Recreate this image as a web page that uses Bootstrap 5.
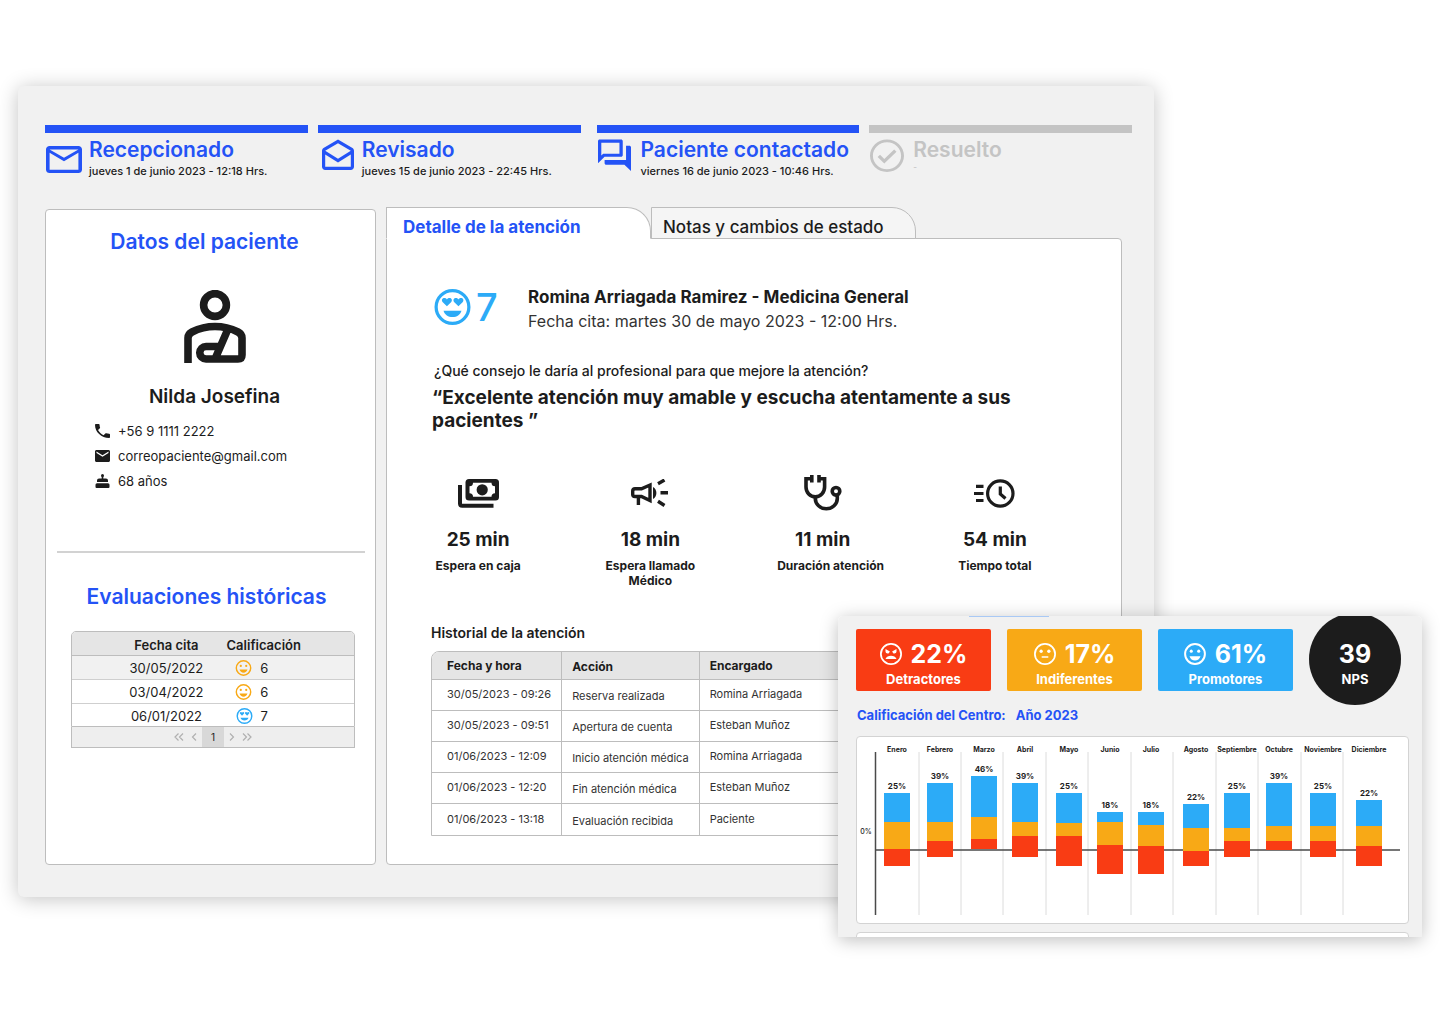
<!DOCTYPE html>
<html lang="es">
<head>
<meta charset="utf-8">
<meta name="viewport" content="width=device-width, initial-scale=1">
<title>Detalle de la atención</title>
<link href="https://cdn.jsdelivr.net/npm/bootstrap@5.3.0/dist/css/bootstrap.min.css" rel="stylesheet">
<style>
  :root { --brand: #2453f6; --ink: #1c1c1c; --sky: #2cabf7; --amber: #f8a916; --red: #f93c14; --line: #bdbdbd; --panel: #f1f1f1; }
  body { font-family: Inter, "Liberation Sans", sans-serif; color: var(--ink); background: #fff; font-size: 13px; line-height: 16px; }
  svg { display: block; flex: none; }
  .stage { padding: 86px 286px 64px 18px; }
  .case-panel { background: var(--panel); border-radius: 6px; box-shadow: 0 2px 20px rgba(0,0,0,.24); padding: 39px 22px 32px 27px; }
  .steps { gap: 16px; }
  .step-pair { gap: 10px; }
  .step { border-top: 8px solid var(--brand); color: var(--brand); height: 82px; padding-top: 5px; }
  .step-icon { width: 44px; height: 34px; padding-left: 1px; }
  .step-title { font-size: 21px; line-height: 24px; font-weight: 600; margin: 0 0 1px; }
  .step-date { font-size: 11px; line-height: 16px; font-weight: 500; color: var(--ink); margin: 0; }
  .step-pending { border-color: #c4c4c4; color: #c4c4c4; }
  .step-pending .step-date { color: #c4c4c4; font-size: 8px; line-height: 8px; }
  .workspace { gap: 10px; padding-right: 10px; }
  .patient { flex: 0 0 331px; margin-top: 2px; background: #fff; border: 1px solid var(--line); border-radius: 4px; padding: 20px 11px; }
  .section-title { color: var(--brand); font-size: 21px; line-height: 24px; font-weight: 600; margin: 0 12px 0 0; text-align: center; }
  .patient-icon { margin: 36px auto 0; }
  .patient-name { font-size: 19px; line-height: 24px; font-weight: 600; margin: 22px 0 0; }
  .contact { margin: 9px 0 0 38px; padding: 0; list-style: none; }
  .contact li { height: 25px; gap: 8px; }
  .contact a { color: inherit; text-decoration: none; }
  .divider { border: 0; border-top: 2px solid #d2d2d2; opacity: 1; margin: 58px -1px 32px 0; }
  .ratings { margin: 22px 9px 0 14px; }
  .ratings table { width: 100%; border-collapse: separate; border-spacing: 0; border: 1px solid var(--line); border-radius: 5px 5px 0 0; overflow: hidden; }
  .ratings th { background: #e5e5e5; font-size: 13px; font-weight: 600; height: 24px; padding: 2px 0 0; text-align: center; border-bottom: 1px solid var(--line); }
  .ratings td { height: 24px; padding: 1px 0 0; text-align: center; border-bottom: 1px solid #cfcfcf; }
  .ratings tbody tr:last-child td { border-bottom: 0; height: 22px; }
  .ratings tbody tr:first-child td { background: #f1f1f1; }
  .pager { background: #eee; border: 1px solid var(--line); border-top: 0; height: 21px; gap: 3px; }
  .pager button { background: none; border: 0; padding: 0 2px; height: 20px; color: #b0b0b0; font-size: 10px; }
  .pager .current { background: #d8d8d8; width: 22px; color: var(--ink); }
  .tabs { margin-bottom: -1px; position: relative; }
  .tabs button { width: 265px; height: 32px; font-size: 17px; text-align: left; border: 1px solid var(--line); border-radius: 0 24px 0 0; background: #f5f5f5; color: var(--ink); padding: 8px 0 0 11px; line-height: 22px; font-weight: 500; }
  .tabs button.active { background: #fff; border-bottom-color: #fff; color: var(--brand); font-weight: 700; padding-left: 16px; }
  .detail { background: #fff; border: 1px solid var(--line); border-radius: 0 4px 4px 4px; padding: 46px 40px 28px 44px; }
  .score { color: var(--sky); font-size: 38px; line-height: 38px; font-weight: 500; gap: 5px; width: 93px; padding-left: 3px; padding-top: 3px; }
  .visit-name { font-size: 17px; line-height: 24px; font-weight: 700; margin: 0; }
  .visit-date { font-size: 16px; line-height: 24px; color: #333; margin: 0; }
  .question { font-size: 14px; line-height: 20px; font-weight: 500; margin: 28px 0 0 3px; }
  .quote { font-size: 19px; line-height: 23px; font-weight: 700; margin: 5px 0 0 1px; max-width: 600px; }
  .metrics { margin: 41px 0 0 -39px; max-width: 690px; }
  .metric-icon { height: 40px; }
  .metric-value { font-size: 19px; line-height: 24px; font-weight: 700; margin: 15px 0 0; }
  .metric-label { font-size: 12px; line-height: 15px; font-weight: 700; margin: 6px 0 0; }
  .log-title { font-size: 14px; line-height: 18px; font-weight: 600; margin: 36px 0 9px; }
  .log { width: 100%; border-collapse: separate; border-spacing: 0; border: 1px solid var(--line); border-radius: 8px 0 0 0; overflow: hidden; font-size: 11px; color: #333; white-space: nowrap; }
  .log th { background: #e5e5e5; font-size: 12px; font-weight: 700; color: var(--ink); height: 28px; }
  .log th, .log td { border-bottom: 1px solid var(--line); padding: 0 10px; }
  .log td { height: 31px; padding-bottom: 2px; }
  .log tr > :first-child { width: 130px; padding-left: 15px; border-right: 1px solid var(--line); }
  .log tr > :nth-child(2) { width: 137px; padding-top: 2px; padding-bottom: 0; border-right: 1px solid var(--line); }
  .log tr:last-child td { border-bottom: 0; }
  .log thead th { border-bottom: 1px solid var(--line); }
  .nps-panel { position: absolute; top: 616px; right: 18px; width: 584px; height: 321px; overflow: hidden; background: var(--panel); border-radius: 5px 5px 0 0; padding: 0 13px 0 18px; }
  .nps-shadow { position: absolute; top: 616px; right: 18px; width: 584px; height: 321px; border-radius: 5px; box-shadow: 0 3px 18px rgba(0,0,0,.26); }
  .filter-edge { width: 80px; height: 1px; background: #a9c9f5; margin-left: 113px; }
  .tiles { gap: 16px; height: 89px; }
  .tile { width: 135px; height: 62px; margin-top: 12px; border-radius: 2px; color: #fff; text-align: center; padding-top: 9px; }
  .tile-value { font-size: 25px; line-height: 32px; font-weight: 700; gap: 9px; margin: 0; }
  .tile-label { font-size: 13px; line-height: 16px; font-weight: 700; margin: 1px 0 0; }
  .nps-disc { width: 92px; height: 92px; margin-top: -4px; border-radius: 50%; background: var(--ink); color: #fff; text-align: center; padding-top: 25px; }
  .chart-title { color: var(--brand); font-size: 13px; line-height: 18px; font-weight: 700; margin: 0 0 12px 1px; gap: 10px; }
  .chart-card { background: #fff; border: 1px solid #d3d3d3; border-radius: 4px; }
  .chart-card text { font-family: Inter, "Liberation Sans", sans-serif; font-weight: 700; fill: var(--ink); text-anchor: middle; }
  .next-card { height: 30px; margin-top: 8px; }
</style>
<script src="https://cdn.jsdelivr.net/npm/bootstrap@5.3.0/dist/js/bootstrap.bundle.min.js"></script>
</head>
<body>
<svg width="0" height="0" class="position-absolute" aria-hidden="true">
  <symbol id="smile" viewBox="2 2 20 20">
    <circle cx="12" cy="12" r="9" fill="none" stroke="currentColor" stroke-width="1.8"/>
    <circle cx="8.6" cy="9.4" r="1.4" fill="currentColor"/><circle cx="15.4" cy="9.4" r="1.4" fill="currentColor"/>
    <path fill="currentColor" d="M12 18c2.300 0 4.300-1.500 5-4H7c.7 2.500 2.700 4 5 4z"/>
  </symbol>
  <symbol id="love" viewBox="2 2 20 20">
    <circle cx="12" cy="12" r="9.100" fill="none" stroke="currentColor" stroke-width="1.800"/>
    <path fill="currentColor" d="M8.900 11.600 6.600 9.300C5.600 8.200 6.400 7 7.500 7c.7 0 1.100.3 1.400.8.3-.5.7-.8 1.400-.8 1.100 0 1.900 1.200.9 2.300z"/>
    <path fill="currentColor" d="M15.300 11.600 13 9.300C12 8.200 12.800 7 13.900 7c.7 0 1.100.3 1.400.8.3-.5.7-.8 1.400-.8 1.100 0 1.900 1.200.9 2.300z"/>
    <path fill="currentColor" d="M12 17.600c2.400 0 4.300-1.200 5-3.500H7c.7 2.300 2.600 3.500 5 3.500z"/>
  </symbol>
</svg>

<main class="stage">
  <div class="case-panel">
    <div class="steps d-flex">
      <div class="step-pair d-flex flex-fill w-50">
        <div class="step d-flex w-50">
          <div class="step-icon pt-1"><svg class="mt-1" width="36" height="27" viewBox="2 4 20 16" preserveAspectRatio="none" fill="currentColor"><path d="M22 6c0-1.100-.9-2-2-2H4c-1.100 0-2 .9-2 2v12c0 1.100.9 2 2 2h16c1.100 0 2-.9 2-2V6zm-2 0l-8 5-8-5h16zm0 12H4V8l8 5 8-5v10z"/></svg></div>
          <div><h2 class="step-title">Recepcionado</h2><p class="step-date">jueves 1 de junio 2023 - 12:18 Hrs.</p></div>
        </div>
        <div class="step d-flex w-50">
          <div class="step-icon ps-1"><svg width="32" height="32" viewBox="2 0 20 20" preserveAspectRatio="none" fill="currentColor"><path d="M22 8c0-.72-.37-1.350-.94-1.700L12 1 2.950 6.300C2.380 6.650 2 7.280 2 8v10c0 1.100.9 2 2 2h16c1.100 0 2-.9 2-2V8zm-2 0L12 13 4 8l8-4.680L20 8zM4 18v-7.660l8 5.020 8-5V18H4z"/></svg></div>
          <div><h2 class="step-title">Revisado</h2><p class="step-date">jueves 15 de junio 2023 - 22:45 Hrs.</p></div>
        </div>
      </div>
      <div class="step-pair d-flex flex-fill w-50">
        <div class="step d-flex w-50">
          <div class="step-icon"><svg width="33" height="33" viewBox="2 1 20 21" preserveAspectRatio="none" fill="currentColor"><path d="M15 4v7H5.170L4 12.170V4h11m1-2H3c-.55 0-1 .45-1 1v14l4-4h10c.55 0 1-.45 1-1V3c0-.55-.45-1-1-1zm5 4h-2v9H6v2c0 .55.45 1 1 1h11l4 4V7c0-.55-.45-1-1-1z"/></svg></div>
          <div><h2 class="step-title">Paciente contactado</h2><p class="step-date">viernes 16 de junio 2023 - 10:46 Hrs.</p></div>
        </div>
        <div class="step step-pending d-flex w-50">
          <div class="step-icon"><svg width="34" height="34" viewBox="2 1 20 21" preserveAspectRatio="none" fill="currentColor"><path d="M12 2C6.480 2 2 6.480 2 12s4.480 10 10 10 10-4.480 10-10S17.520 2 12 2zm0 18.300c-4.580 0-8.300-3.720-8.300-8.300s3.720-8.300 8.300-8.300 8.300 3.720 8.300 8.300-3.720 8.300-8.300 8.300zm4.200-12.200L10.400 13.900 7.900 11.400 6.500 12.800l3.900 3.900 7.200-7.200z"/></svg></div>
          <div><h2 class="step-title">Resuelto</h2><p class="step-date">-</p></div>
        </div>
      </div>
    </div>

    <div class="workspace d-flex align-items-stretch">
      <aside class="patient">
        <h2 class="section-title">Datos del paciente</h2>
        <div class="text-center ps-2">
          <svg class="patient-icon" width="62" height="73" viewBox="0 0 62 73" fill="none" stroke="#1c1c1c" stroke-width="7.600"><circle cx="31" cy="15" r="11.400"/><path d="M4 73V48Q4 44 8 42 19 36.500 31 36.500T54 42Q58 44 58 48V65Q58 69 54 69H22A6 6 0 0 1 22 56.500H36M44 39 31 69"/></svg>
          <h3 class="patient-name">Nilda Josefina</h3>
        </div>
        <ul class="contact">
          <li class="d-flex align-items-center"><svg width="15" height="14" viewBox="3 3 18 18" preserveAspectRatio="none" fill="#1c1c1c"><path d="M6.620 10.790c1.440 2.830 3.760 5.140 6.590 6.590l2.200-2.200c.27-.27.67-.36 1.020-.24 1.120.37 2.330.57 3.570.57.55 0 1 .45 1 1V20c0 .55-.45 1-1 1C10.610 21 3 13.390 3 4c0-.55.45-1 1-1h3.500c.55 0 1 .45 1 1 0 1.250.2 2.450.57 3.570.11.35.03.74-.25 1.020z"/></svg><a href="tel:+56911112222">+56 9 1111 2222</a></li>
          <li class="d-flex align-items-center"><svg width="15" height="12" viewBox="2 4 20 16" preserveAspectRatio="none" fill="#1c1c1c"><path d="M20 4H4c-1.100 0-2 .9-2 2v12c0 1.100.9 2 2 2h16c1.100 0 2-.9 2-2V6c0-1.100-.9-2-2-2zm0 4l-8 5-8-5V6l8 5 8-5z"/></svg><a href="mailto:correopaciente@gmail.com">correopaciente@gmail.com</a></li>
          <li class="d-flex align-items-center"><svg width="15" height="14" viewBox="0 0 15 14" fill="#1c1c1c"><circle cx="7.500" cy="1.500" r="1.500"/><path d="M6.700 2h1.600v3H6.700zM4 4.500h7a2 2 0 0 1 2 2V8H2V6.500a2 2 0 0 1 2-2zM2 9.200h11a1.500 1.500 0 0 1 1.500 1.500V13a1 1 0 0 1-1 1h-12a1 1 0 0 1-1-1v-2.300A1.500 1.500 0 0 1 2 9.200z"/></svg><span>68 años</span></li>
        </ul>
        <hr class="divider">
        <h2 class="section-title me-2">Evaluaciones históricas</h2>
        <div class="ratings">
          <table>
            <colgroup><col style="width:20%"><col style="width:27%"><col style="width:42%"><col></colgroup>
            <thead><tr><th></th><th>Fecha cita</th><th>Calificación</th><th></th></tr></thead>
            <tbody>
              <tr><td></td><td>30/05/2022</td><td><span class="d-flex justify-content-center gap-2 pe-4"><svg width="17" height="16" color="#f8a916"><use href="#smile"/></svg>6</span></td><td></td></tr>
              <tr><td></td><td>03/04/2022</td><td><span class="d-flex justify-content-center gap-2 pe-4"><svg width="17" height="16" color="#f8a916"><use href="#smile"/></svg>6</span></td><td></td></tr>
              <tr><td></td><td>06/01/2022</td><td><span class="d-flex justify-content-center gap-2 pe-4"><svg width="17" height="16" color="#2cabf7"><use href="#love"/></svg>7</span></td><td></td></tr>
            </tbody>
          </table>
          <nav class="pager d-flex justify-content-center align-items-center" aria-label="Páginas">
            <button type="button" aria-label="Primera"><svg width="10" height="8" viewBox="0 0 10 8" fill="none" stroke="currentColor" stroke-width="1.200"><path d="M4.500.5 1 4l3.500 3.500M9 .5 5.500 4 9 7.500"/></svg></button>
            <button type="button" aria-label="Anterior"><svg width="6" height="8" viewBox="0 0 6 8" fill="none" stroke="currentColor" stroke-width="1.200"><path d="M5 .5 1.500 4 5 7.500"/></svg></button>
            <button type="button" class="current">1</button>
            <button type="button" aria-label="Siguiente"><svg width="6" height="8" viewBox="0 0 6 8" fill="none" stroke="currentColor" stroke-width="1.200"><path d="M1 .5 4.500 4 1 7.500"/></svg></button>
            <button type="button" aria-label="Última"><svg width="10" height="8" viewBox="0 0 10 8" fill="none" stroke="currentColor" stroke-width="1.200"><path d="M1 .5 4.500 4 1 7.500M5.500.5 9 4 5.500 7.500"/></svg></button>
          </nav>
        </div>
      </aside>

      <section class="flex-fill d-flex flex-column">
        <div class="tabs d-flex" role="tablist">
          <button type="button" role="tab" aria-selected="true" class="active">Detalle de la atención</button>
          <button type="button" role="tab" aria-selected="false">Notas y cambios de estado</button>
        </div>
        <div class="detail flex-fill">
          <div class="d-flex align-items-start">
            <div class="score d-flex align-items-center"><svg width="37" height="36"><use href="#love"/></svg><span>7</span></div>
            <div class="ps-1"><h2 class="visit-name">Romina Arriagada Ramirez - Medicina General</h2><p class="visit-date">Fecha cita: martes 30 de mayo 2023 - 12:00 Hrs.</p></div>
          </div>
          <p class="question">¿Qué consejo le daría al profesional para que mejore la atención?</p>
          <p class="quote">“Excelente atención muy amable y escucha atentamente a sus pacientes ”</p>
          <div class="metrics d-flex text-center">
            <div class="w-25">
              <div class="metric-icon d-flex align-items-center justify-content-center"><svg width="41" height="29" viewBox="0 0 41 29"><path d="M2 6V24.500Q2 26.700 4.200 26.700H35.500" fill="none" stroke="#1c1c1c" stroke-width="4"/><rect x="7.500" width="33.500" height="21.500" rx="3.500" fill="#1c1c1c"/><path fill="#fff" d="M15 3.700H33.500A3.500 3.500 0 0 0 37 7.200V14.200A3.500 3.500 0 0 0 33.500 17.700H15A3.500 3.500 0 0 0 11.500 14.200V7.200A3.500 3.500 0 0 0 15 3.700z"/><circle cx="24.200" cy="10.800" r="5.600" fill="#1c1c1c"/></svg></div>
              <p class="metric-value">25 min</p><p class="metric-label">Espera en caja</p>
            </div>
            <div class="w-25">
              <div class="metric-icon d-flex align-items-center justify-content-center"><svg width="38" height="28" viewBox="0 0 38 28" fill="none" stroke="#1c1c1c" stroke-width="3.400"><path d="M10.500 9.800H4Q1.700 9.800 1.700 12V15.500Q1.700 17.500 4 17.500H10.500L19 21.500V6z"/><path d="M7.400 18V26"/><path d="M22 8a7 7 0 0 1 0 12z" fill="#1c1c1c" stroke="none"/><path d="M27 4.700 33.500 1M29.500 13.700H37M27 22.300 33.500 26.500"/></svg></div>
              <p class="metric-value">18 min</p><p class="metric-label">Espera llamado<br>Médico</p>
            </div>
            <div class="w-25">
              <div class="metric-icon d-flex align-items-center justify-content-center"><svg width="38" height="36" viewBox="0 0 38 36" fill="none" stroke="#1c1c1c" stroke-width="3.600"><path d="M8 3.800H2V12a9.300 9.800 0 0 0 18.600 0V3.800H14.500M7.800 0V7.500M15 0V7.500M11.300 22v1.500a11 10.300 0 0 0 22 0V21"/><circle cx="32" cy="16.300" r="3.800"/></svg></div>
              <p class="metric-value">11 min</p><p class="metric-label ps-3">Duración atención</p>
            </div>
            <div class="w-25">
              <div class="metric-icon d-flex align-items-center justify-content-center"><svg width="41" height="29" viewBox="0 0 41 29" fill="none" stroke="#1c1c1c" stroke-width="3.200"><circle cx="26.300" cy="14.500" r="12.700"/><path d="M26.300 7.500V15L31.500 19.500M2 7.300H9.500M0 14.500H9.500M2 21.500H9.500"/></svg></div>
              <p class="metric-value">54 min</p><p class="metric-label">Tiempo total</p>
            </div>
          </div>
          <h3 class="log-title">Historial de la atención</h3>
          <table class="log">
            <thead><tr><th>Fecha y hora</th><th>Acción</th><th>Encargado</th></tr></thead>
            <tbody>
              <tr><td>30/05/2023 - 09:26</td><td>Reserva realizada</td><td>Romina Arriagada</td></tr>
              <tr><td>30/05/2023 - 09:51</td><td>Apertura de cuenta</td><td>Esteban Muñoz</td></tr>
              <tr><td>01/06/2023 - 12:09</td><td>Inicio atención médica</td><td>Romina Arriagada</td></tr>
              <tr><td>01/06/2023 - 12:20</td><td>Fin atención médica</td><td>Esteban Muñoz</td></tr>
              <tr><td>01/06/2023 - 13:18</td><td>Evaluación recibida</td><td>Paciente</td></tr>
            </tbody>
          </table>
        </div>
      </section>
    </div>
  </div>
</main>

<div class="nps-shadow"></div>
<section class="nps-panel">
  <div class="filter-edge"></div>
  <div class="tiles d-flex">
    <div class="tile" style="background:#f93c14"><p class="tile-value d-flex justify-content-center align-items-center"><svg width="22" height="22" viewBox="2 2 20 20" fill="#fff"><circle cx="12" cy="12" r="9.200" fill="none" stroke="#fff" stroke-width="1.600"/><path d="M7 16.500c.8-2 2.700-3 5-3s4.200 1 5 3zM7 7.500l4 2.300-1 1.500c-1 .7-3 .2-3-1.500zM17 7.500l-4 2.300 1 1.500c1 .7 3 .2 3-1.500z"/></svg>22%</p><p class="tile-label">Detractores</p></div>
    <div class="tile" style="background:#f8a916"><p class="tile-value d-flex justify-content-center align-items-center"><svg width="22" height="22" viewBox="2 2 20 20" fill="#fff"><circle cx="12" cy="12" r="9.200" fill="none" stroke="#fff" stroke-width="1.600"/><circle cx="8.500" cy="9.500" r="1.500"/><circle cx="15.500" cy="9.500" r="1.500"/><path d="M9 14h6v1.500H9z"/></svg>17%</p><p class="tile-label">Indiferentes</p></div>
    <div class="tile" style="background:#2cabf7"><p class="tile-value d-flex justify-content-center align-items-center"><svg width="22" height="22"><use href="#smile"/></svg>61%</p><p class="tile-label">Promotores</p></div>
    <div class="nps-disc"><p class="tile-value">39</p><p class="tile-label">NPS</p></div>
  </div>
  <h2 class="chart-title d-flex"><span>Calificación del Centro:</span><span>Año 2023</span></h2>
  <div class="chart-card"><svg id="chart" class="w-100" viewBox="857 737 551 186" role="img" aria-label="Calificación por mes"></svg></div>
  <div class="chart-card next-card"></div>
</section>

<script>
  // month, bar centre, share label, then the edges of the blue, amber and red segments from top to bottom
  const months = [
    ['Enero', 897, 25, 793, 822, 849, 866], ['Febrero', 940, 39, 783, 822, 841, 857],
    ['Marzo', 984, 46, 776, 817, 839, 849], ['Abril', 1025, 39, 783, 822, 836, 857],
    ['Mayo', 1069, 25, 793, 823, 836, 866], ['Junio', 1110, 18, 812, 822, 845, 874],
    ['Julio', 1151, 18, 812, 825, 846, 874], ['Agosto', 1196, 22, 804, 828, 851, 866],
    ['Septiembre', 1237, 25, 793, 828, 841, 857], ['Octubre', 1279, 39, 783, 826, 841, 850],
    ['Noviembre', 1323, 25, 793, 826, 841, 857], ['Diciembre', 1369, 22, 800, 826, 846, 866]
  ];
  const dividers = [919, 961, 1003, 1046, 1088, 1131, 1173, 1216, 1258, 1301, 1343];
  let out = dividers.map(x => `<path d="M${x} 752V915" stroke="#dcdcdc"/>`).join('');
  out += '<path d="M875.5 752V915M875 850H1400" stroke="#4a4a4a" stroke-width="1.5" fill="none"/>';
  out += '<text x="866" y="834" font-size="7" style="font-weight:500">0%</text>';
  for (const [name, x, share, a, b, c, d] of months) {
    out += `<text x="${x}" y="752" font-size="7">${name}</text><text x="${x}" y="${a - 4}" font-size="8">${share}%</text>`;
    out += `<rect x="${x - 13}" y="${a}" width="26" height="${b - a}" fill="#2cabf7"/><rect x="${x - 13}" y="${b}" width="26" height="${c - b}" fill="#f8a916"/><rect x="${x - 13}" y="${c}" width="26" height="${d - c}" fill="#f93c14"/>`;
  }
  document.getElementById('chart').innerHTML = out;
</script>
</body>
</html>
